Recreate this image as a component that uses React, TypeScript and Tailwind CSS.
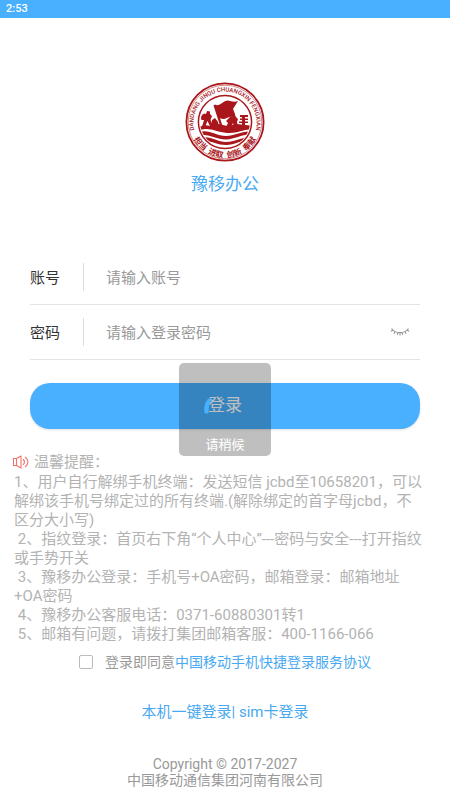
import { useState } from 'react';

const notices = [
  '1、用户自行解绑手机终端：发送短信 jcbd至10658201，可以',
  '解绑该手机号绑定过的所有终端.(解除绑定的首字母jcbd，不',
  '区分大小写)',
  ' 2、指纹登录：首页右下角“个人中心”---密码与安全---打开指纹',
  '或手势开关',
  ' 3、豫移办公登录：手机号+OA密码，邮箱登录：邮箱地址',
  '+OA密码',
  ' 4、豫移办公客服电话：0371-60880301转1',
  ' 5、邮箱有问题，请拨打集团邮箱客服：400-1166-066',
];

function Logo() {
  return (
    <svg viewBox="0 0 80 80" className="h-20 w-20" aria-label="豫移办公">
      <defs>
        <path id="arc-top" d="M10.5 52 A31.5 31.5 0 1 1 69.5 52" />
        <path id="arc-bottom" d="M4.4 40 A35.6 35.6 0 0 0 75.6 40" />
        <clipPath id="seal">
          <circle cx="40" cy="40" r="25" />
        </clipPath>
      </defs>
      <circle cx="40" cy="40" r="38.6" fill="#fff" stroke="#a9161b" strokeWidth="1.8" />
      <circle cx="40" cy="40" r="36.8" stroke="#a9161b" strokeWidth=".5" fill="none" />
      <circle cx="40" cy="40" r="26.6" fill="#fff" stroke="#a9161b" strokeWidth="1.5" />
      <g clipPath="url(#seal)" fill="#a9161b">
        <path d="M12 46 L19 43 L26 44 L34 42 L42 44 L52 42 L69 44 V48 C60 46 53 52 42 51 C30 50 24 44 12 49 Z" />
        <path d="M12 51 C23 46 30 54 41 54 C51 54 57 48 69 50 V53 C58 51 51 57.5 41 57.5 C29 57.5 23 50 12 54.5 Z" />
        <path d="M14 57 C23 52 31 60 41 60 C52 60 57 54 67 56 V58.5 C57 57 51 63 41 63 C30 63 23 56 15 60.5 Z" />
      </g>
      <g fill="#a9161b">
        <path d="M28.5 23.5 L30 22.5 C35 26 39 16 45 19 C48 20 51 20 53 19 L48 27 C50 31 50 33 51 37 C45 30 41 40 35 36 L37.5 44 L35.5 45 Z" />
        <path d="M16.5 38 C15 34 18 31 21 32 L22 29 L25 29.5 L25 32 L27 34 L25.5 38 L28 44 H25 L22.5 39 L20 45 H17 L19 38 Z" />
        <path d="M27 38 L30 36 L33 40 L34 45 H26 Z" />
        <path d="M46 34 A2.2 2.2 0 1 1 50 34 L53 37 L52 40 L53 45 H49 L48 41 L46 45 H41 L43 41 L41 39 L44 36 Z" />
        <path d="M55 33 H63 V35 H60 V36.5 H63 V38 H60 V39.5 H63 V41 H60 V45 H57 V41 H54 V39.5 H57 V38 H55 V36.5 H57 V35 H55 Z" />
      </g>
      <text fill="#a9161b" fontSize="6" fontWeight="500" fontFamily="Roboto, sans-serif">
        <textPath href="#arc-top" startOffset="50%" textAnchor="middle">DANDANG JINQU CHUANGXIN FENGXIAN</textPath>
      </text>
      <text fill="#a9161b" fontSize="8" fontWeight="700" fontFamily="'Noto Sans CJK SC', sans-serif">
        <textPath href="#arc-bottom" startOffset="50%" textAnchor="middle">担当{'\u2002'}进取{'\u2002'}创新{'\u2002'}奉献</textPath>
      </text>
    </svg>
  );
}

function ClosedEyeIcon() {
  return (
    <svg viewBox="0 0 20 10" className="h-[10px] w-5" fill="none" stroke="#999" strokeWidth="1.1">
      <path d="M1.5 1.5 C5.5 7 14.5 7 18.5 1.5" />
      <path d="M3 3.2 L.8 4.2 M5.2 4.6 L3.8 6.8 M8 5.4 L7.3 8 M10 5.6 V8.4 M12 5.4 L12.7 8 M14.8 4.6 L16.2 6.8 M17 3.2 L19.2 4.2" />
    </svg>
  );
}

function SpeakerIcon() {
  return (
    <svg viewBox="0 0 18 14" className="h-[14px] w-[18px]" fill="none" stroke="#f4716c" strokeWidth="1.1">
      <path d="M1.5 3.5 H4.5 L9 1 V13 L4.5 10.5 H1.5 Z M4.5 3.5 V10.5" strokeLinejoin="round" />
      <path d="M11.3 4.5 C12.7 6 12.7 8 11.3 9.5 M13.4 2.3 C16.8 5 16.8 9 13.4 11.7" strokeLinecap="round" />
    </svg>
  );
}

export default function App() {
  const [account, setAccount] = useState('');
  const [password, setPassword] = useState('');
  const [agreed, setAgreed] = useState(false);

  return (
    <div className="min-h-screen bg-white font-[Roboto,'Noto_Sans_CJK_SC',sans-serif] text-[#999]">
      <div className="h-[18px] bg-[#48b0ff] pl-[6px] text-[11px] leading-[18px] font-medium text-white">2:53</div>

      <header className="flex flex-col items-center pt-16">
        <Logo />
        <h1 className="mt-[10px] text-[17px] leading-6 text-[#48a9f0]">豫移办公</h1>
      </header>

      <form className="mt-[54px] px-[30px]" onSubmit={(e) => e.preventDefault()}>
        <div className="flex h-[55px] items-center border-b border-[#e4e4e4]">
          <label htmlFor="account" className="w-[53px] pt-[2px] text-[15px] text-[#333]">账号</label>
          <input
            id="account"
            type="text"
            placeholder="请输入账号"
            value={account}
            onChange={(e) => setAccount(e.target.value)}
            className="h-7 min-w-0 flex-1 border-l border-[#ddd] pt-[2px] pl-[22px] text-[15px] outline-none placeholder:text-[#999]"
          />
        </div>
        <div className="flex h-[55px] items-center border-b border-[#e4e4e4] pr-[10px]">
          <label htmlFor="password" className="w-[53px] pt-[2px] text-[15px] text-[#333]">密码</label>
          <input
            id="password"
            type="password"
            placeholder="请输入登录密码"
            value={password}
            onChange={(e) => setPassword(e.target.value)}
            className="h-7 min-w-0 flex-1 border-l border-[#ddd] pt-[2px] pl-[22px] text-[15px] outline-none placeholder:text-[#999]"
          />
          <button type="button" aria-label="显示密码">
            <ClosedEyeIcon />
          </button>
        </div>

        <div className="relative mt-[23px]">
          <button type="submit" className="h-[46px] w-full rounded-[20px] bg-[#48b0ff] text-[17px] text-white shadow-sm">
            登录
          </button>
          {/* Loading toast */}
          <div className="absolute -top-5 left-1/2 flex h-[93px] w-[92px] -translate-x-1/2 flex-col items-center justify-end rounded-[5px] bg-black/25 pb-px">
            <svg viewBox="0 0 44 44" className="absolute top-6 h-11 w-11" fill="none">
              <path d="M2 26 C1 19 3 13 7 11 L8 13 C6 16 5 20 5 26 Z" fill="#48b0ff" stroke="#48b0ff" strokeWidth="1" />
            </svg>
            <p className="text-[13px] leading-5 text-white">请稍候</p>
          </div>
        </div>
      </form>

      <section className="mt-[22px] pl-3">
        <h2 className="flex items-center gap-1 text-[15px] leading-[22px] text-[#b3b3b3]">
          <SpeakerIcon />
          温馨提醒：
        </h2>
        <div className="pl-[2px] text-[15px] leading-[19px] text-[#b3b3b3]">
          {notices.map((line) => (
            <p key={line} className="whitespace-pre">{line}</p>
          ))}
        </div>
      </section>

      <div className="mt-2 flex items-center justify-center text-sm leading-5">
        <input
          id="agree"
          type="checkbox"
          checked={agreed}
          onChange={(e) => setAgreed(e.target.checked)}
          className="mr-3 h-[14px] w-[14px] appearance-none rounded-[2px] border border-[#bbb] checked:bg-[#48b0ff]"
        />
        <label htmlFor="agree">登录即同意</label>
        <a href="#agreement" className="text-[#48a9f0]">中国移动手机快捷登录服务协议</a>
      </div>

      <nav className="mt-7 flex justify-center text-[15px] leading-6 whitespace-pre text-[#48a9f0]">
        <a href="#one-key">本机一键登录</a>| <a href="#sim">sim卡登录</a>
      </nav>

      <footer className="mt-8 text-center text-sm leading-4">
        <p>Copyright © 2017-2027</p>
        <p>中国移动通信集团河南有限公司</p>
      </footer>
    </div>
  );
}
